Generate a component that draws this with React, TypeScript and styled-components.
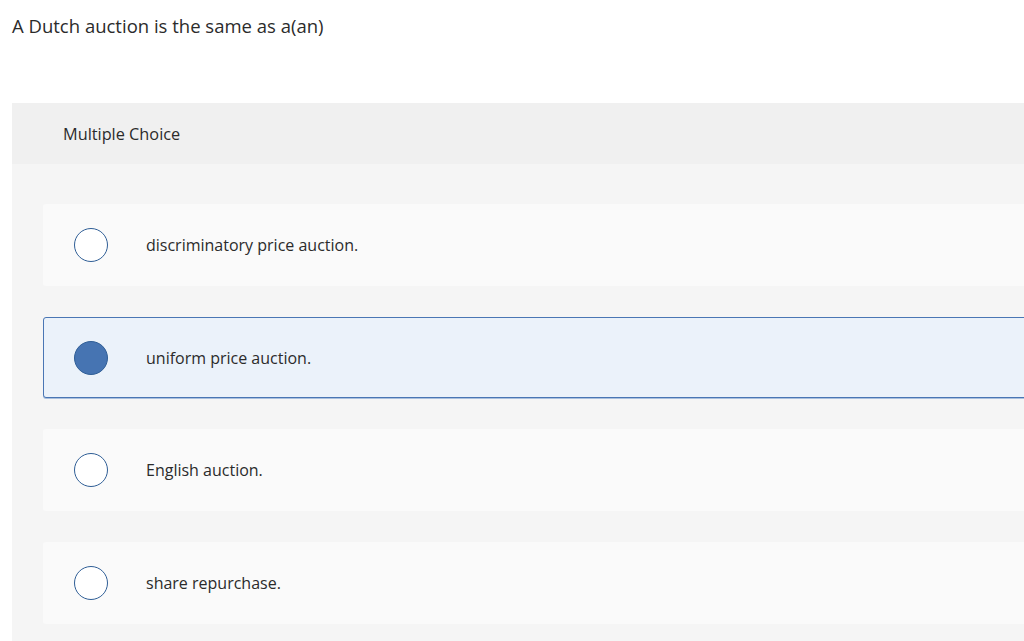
import React from "react";
import styled, { createGlobalStyle } from "styled-components";

const Global = createGlobalStyle`
  html, body { margin: 0; padding: 0; background: #ffffff; overflow: hidden; }
  body { font-family: "Open Sans", Lato, Arial, sans-serif; color: #2d2d2d; }
`;

const Page = styled.div`
  width: 1024px;
  height: 641px;
  overflow: hidden;
`;

const Question = styled.h1`
  margin: 0;
  padding: 13px 0 0 12px;
  height: 103px;
  box-sizing: border-box;
  font-size: 18.5px;
  font-weight: 400;
  line-height: 26px;
  color: #2b2b2b;
`;

const Panel = styled.section`
  margin-left: 12px;
  width: 1040px;
  background: #f5f5f5;
`;

const PanelHeader = styled.div`
  height: 61px;
  background: #f0f0f0;
  display: flex;
  align-items: center;
  padding-left: 51px;
  font-size: 16.3px;
  color: #2b2b2b;
`;

const Options = styled.div`
  display: flex;
  flex-direction: column;
  gap: 31px;
  padding: 40px 0 40px 31px;
`;

const Option = styled.label<{ $selected?: boolean }>`
  display: flex;
  align-items: center;
  height: ${(p) => (p.$selected ? "81px" : "82px")};
  box-sizing: border-box;
  border-radius: 3px;
  background: ${(p) => (p.$selected ? "#ebf2fa" : "#fafafa")};
  border: 1px solid ${(p) => (p.$selected ? "#4a76b4" : "transparent")};
  box-shadow: ${(p) => (p.$selected ? "0 1px 0 #a9c0de" : "none")};
  padding-left: 30px;
  font-size: 16px;
  color: #2b2b2b;
`;

const Radio = styled.span<{ $checked?: boolean }>`
  width: 34px;
  height: 34px;
  box-sizing: border-box;
  border-radius: 50%;
  border: 1.5px solid #2f5e96;
  background: ${(p) => (p.$checked ? "#4674b2" : "#ffffff")};
  flex: none;
  margin-right: 38px;
`;

const choices = [
  "discriminatory price auction.",
  "uniform price auction.",
  "English auction.",
  "share repurchase.",
];

export default function App() {
  return (
    <Page>
      <Global />
      <Question>A Dutch auction is the same as a(an)</Question>
      <Panel>
        <PanelHeader>Multiple Choice</PanelHeader>
        <Options>
          {choices.map((c, i) => (
            <Option key={c} $selected={i === 1}>
              <Radio $checked={i === 1} />
              {c}
            </Option>
          ))}
        </Options>
      </Panel>
    </Page>
  );
}
